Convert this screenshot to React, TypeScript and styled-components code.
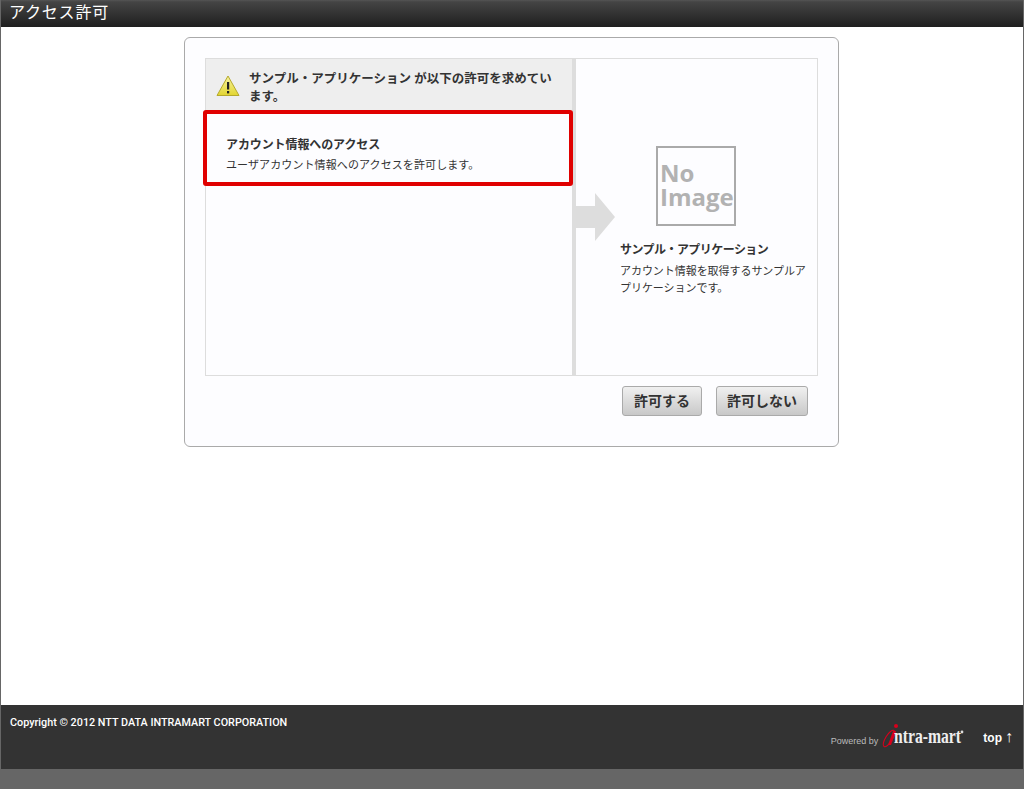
import React from 'react';
import styled, { createGlobalStyle } from 'styled-components';

const jp = `"Liberation Sans", "Noto Sans CJK JP", sans-serif`;

const GlobalStyle = createGlobalStyle`
    html, body {
        margin: 0;
        padding: 0;
        background: #666;
    }
    * {
        box-sizing: border-box;
    }
`;

const Page = styled.div`
    display: flex;
    flex-direction: column;
    height: 789px;
    overflow: hidden;
    font-family: ${jp};
    color: #333;
    border-left: 1px solid #666;
    border-right: 1px solid #666;
    padding-bottom: 20px;
`;

const Header = styled.div`
    height: 27px;
    margin: 0 -1px;
    padding: 1px 0 0 9px;
    background: linear-gradient(#555 0, #444 2px, #1f1f1f 100%);
    color: #fff;
    font-size: 16px;
    line-height: 24px;
    letter-spacing: 0.8px;
`;

const Main = styled.div`
    flex: 1;
    background: #fff;
    padding-top: 10px;
`;

const Card = styled.div`
    width: 655px;
    height: 410px;
    margin-left: 183px;
    padding: 20px 20px 0 20px;
    background: #fdfdff;
    border: 1px solid #aaa;
    border-radius: 6px;
`;

const Panels = styled.div`
    position: relative;
    display: flex;
    width: 613px;
    height: 318px;
    border: 1px solid #ddd;
`;

const LeftPanel = styled.div`
    width: 370px;
    border-right: 4px solid #ddd;
`;

const Notice = styled.div`
    display: flex;
    align-items: center;
    gap: 9px;
    height: 51px;
    padding: 3px 10px 0;
    background: #eee;
    font-size: 12.5px;
    font-weight: bold;
    line-height: 18px;
`;

const NoticeText = styled.span`
    margin-top: 3px;
`;

const WarningIcon = styled.svg`
    flex: none;
    width: 24px;
    height: 22px;
`;

const Scope = styled.div`
    width: 370px;
    height: 76px;
    margin-left: -3px;
    padding: 22px 0 0 19px;
    border: 4px solid #e00000;
    border-radius: 3px;
`;

const ScopeTitle = styled.div`
    font-size: 12px;
    font-weight: bold;
    letter-spacing: -0.1px;
    line-height: 18px;
    margin-bottom: 2px;
`;

const ScopeText = styled.div`
    font-size: 11px;
    letter-spacing: 0.1px;
    line-height: 18px;
`;

const Arrow = styled.svg`
    position: absolute;
    left: 369px;
    top: 134px;
    width: 40px;
    height: 48px;
`;

const RightPanel = styled.div`
    flex: 1;
    padding: 87px 10px 0 44px;
`;

const NoImage = styled.div`
    display: flex;
    flex-direction: column;
    justify-content: center;
    width: 80px;
    height: 80px;
    margin: 0 0 15px 36px;
    padding: 0 0 2px 2px;
    border: 2px solid #aaa;
    color: #b2b2b2;
    font-family: "Open Sans", "Liberation Sans", sans-serif;
    font-size: 24px;
    font-weight: bold;
    line-height: 24px;
`;

const AppName = styled.div`
    font-size: 12px;
    font-weight: bold;
    letter-spacing: -0.55px;
    line-height: 18px;
    margin-bottom: 4px;
`;

const AppText = styled.div`
    width: 188px;
    font-size: 11px;
    letter-spacing: -0.05px;
    line-height: 17px;
`;

const Buttons = styled.div`
    display: flex;
    justify-content: flex-end;
    gap: 14px;
    width: 613px;
    padding: 10px 10px 0 0;
`;

const Button = styled.button<{ $w: number }>`
    width: ${p => p.$w}px;
    height: 30px;
    padding: 0 0 3px;
    border: 1px solid #aaa;
    border-radius: 3px;
    background: linear-gradient(#f0f0f0, #c8c8c8);
    color: #333;
    font-family: ${jp};
    font-size: 14px;
    font-weight: bold;
`;

const Footer = styled.div`
    display: flex;
    justify-content: space-between;
    height: 64px;
    padding: 11px 10px 0 9px;
    background: #333;
    color: #fff;
`;

const Copyright = styled.div`
    font-family: Roboto, "Liberation Sans", sans-serif;
    font-size: 10.8px;
    font-weight: 500;
    line-height: 14px;
`;

const FooterRight = styled.div`
    display: flex;
    align-items: flex-end;
    height: 32px;
`;

const Powered = styled.span`
    font-size: 9px;
    color: #bbb;
    line-height: 13px;
    margin-right: 3px;
`;

const Logo = styled.svg`
    width: 84px;
    height: 26px;
    overflow: visible;
`;

const LogoText = styled.text`
    font-family: "Liberation Serif", serif;
    font-size: 22px;
    font-weight: bold;
    fill: #eee;
`;

const TopLink = styled.a`
    margin-left: 18px;
    margin-bottom: 2px;
    font-size: 12px;
    font-weight: bold;
    line-height: 16px;
    color: #fff;
`;

const TopArrow = styled.span`
    margin-left: 3px;
    font-weight: normal;
    font-size: 16px;
    color: #fff;
`;

const App = () => (
    <>
        <GlobalStyle />
        <Page>
            <Header>アクセス許可</Header>
            <Main>
                <Card>
                    <Panels>
                        <LeftPanel>
                            <Notice>
                                <WarningIcon viewBox="0 0 24 22">
                                    <defs>
                                        <linearGradient id="warn" x1="0" y1="0" x2="0" y2="1">
                                            <stop offset="0" stopColor="#f7f4a0" />
                                            <stop offset="1" stopColor="#e2d530" />
                                        </linearGradient>
                                    </defs>
                                    <path d="M12 1 L23 20.5 H1 Z" fill="url(#warn)" stroke="#b5a92c" strokeLinejoin="round" />
                                    <rect x="11" y="7" width="2.2" height="7.5" fill="#222" />
                                    <rect x="11" y="16" width="2.2" height="2.4" fill="#222" />
                                </WarningIcon>
                                <NoticeText>サンプル・アプリケーション が以下の許可を求めています。</NoticeText>
                            </Notice>
                            <Scope>
                                <ScopeTitle>アカウント情報へのアクセス</ScopeTitle>
                                <ScopeText>ユーザアカウント情報へのアクセスを許可します。</ScopeText>
                            </Scope>
                        </LeftPanel>
                        <Arrow viewBox="0 0 40 48">
                            <path d="M0 13 H20 V0 L40 24 L20 48 V35 H0 Z" fill="#ddd" />
                        </Arrow>
                        <RightPanel>
                            <NoImage>
                                <span>No</span>
                                <span>Image</span>
                            </NoImage>
                            <AppName>サンプル・アプリケーション</AppName>
                            <AppText>アカウント情報を取得するサンプルアプリケーションです。</AppText>
                        </RightPanel>
                    </Panels>
                    <Buttons>
                        <Button $w={80}>許可する</Button>
                        <Button $w={92}>許可しない</Button>
                    </Buttons>
                </Card>
            </Main>
            <Footer>
                <Copyright>Copyright © 2012 NTT DATA INTRAMART CORPORATION</Copyright>
                <FooterRight>
                    <Powered>Powered by</Powered>
                    <Logo viewBox="0 0 84 26">
                        <ellipse cx="8" cy="16.5" rx="3.4" ry="9.5" transform="rotate(32 8 16.5)" fill="none" stroke="#d8001c" strokeWidth="1.1" />
                        <circle cx="15" cy="4" r="2" fill="#d8001c" />
                        <path d="M12 9 L15 9 L10 23 L7 23 Z" fill="#d8001c" />
                        <LogoText x="13" y="21" textLength="67" lengthAdjust="spacingAndGlyphs">ntra-mart</LogoText>
                        <circle cx="81" cy="10" r="1.4" fill="#ddd" />
                    </Logo>
                    <TopLink>top<TopArrow>↑</TopArrow></TopLink>
                </FooterRight>
            </Footer>
        </Page>
    </>
);

export default App;
